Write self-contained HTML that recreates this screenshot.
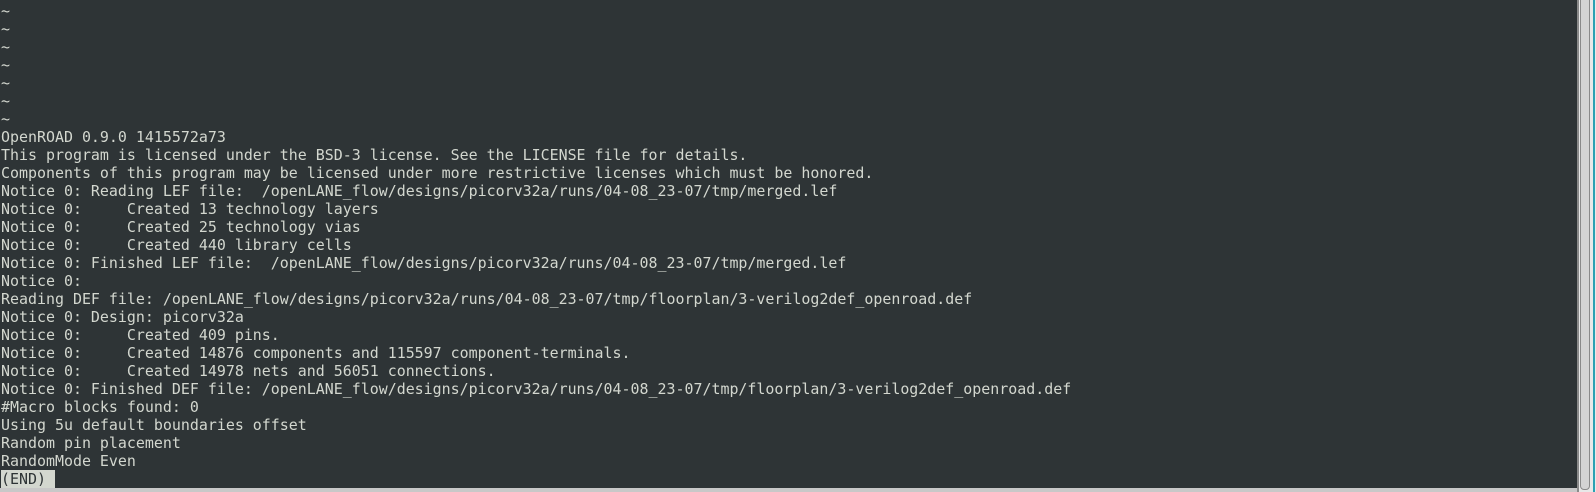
<!DOCTYPE html>
<html><head><meta charset="utf-8"><style>
html,body{margin:0;padding:0;width:1596px;height:492px;overflow:hidden;background:#2e3436;}
pre{margin:0;position:absolute;left:1px;top:2px;font-family:"DejaVu Sans Mono","Liberation Mono",monospace;font-size:14.95px;line-height:18.02px;color:#d3d7cf;}
.end{background:#d3d7cf;color:#2e3436;}
.sb{position:absolute;left:1577px;top:0;width:19px;height:492px;background:#e8e8e8;}
.sb1{position:absolute;left:1577px;top:0;width:2px;height:492px;background:#8a8a8a;}
.thumb{position:absolute;left:1580px;top:-4px;width:8px;height:492px;background:#d4d4d4;border:1px solid #8a8a8a;border-radius:0 0 4px 4px;}
.teal{position:absolute;left:1593px;top:0;width:2px;height:492px;background:#2aa1b3;}
.bot{position:absolute;left:0;top:488px;width:1577px;height:4px;background:#c8c8c8;}
</style></head><body>
<pre>~
~
~
~
~
~
~
OpenROAD 0.9.0 1415572a73
This program is licensed under the BSD-3 license. See the LICENSE file for details.
Components of this program may be licensed under more restrictive licenses which must be honored.
Notice 0: Reading LEF file:  /openLANE_flow/designs/picorv32a/runs/04-08_23-07/tmp/merged.lef
Notice 0:     Created 13 technology layers
Notice 0:     Created 25 technology vias
Notice 0:     Created 440 library cells
Notice 0: Finished LEF file:  /openLANE_flow/designs/picorv32a/runs/04-08_23-07/tmp/merged.lef
Notice 0:
Reading DEF file: /openLANE_flow/designs/picorv32a/runs/04-08_23-07/tmp/floorplan/3-verilog2def_openroad.def
Notice 0: Design: picorv32a
Notice 0:     Created 409 pins.
Notice 0:     Created 14876 components and 115597 component-terminals.
Notice 0:     Created 14978 nets and 56051 connections.
Notice 0: Finished DEF file: /openLANE_flow/designs/picorv32a/runs/04-08_23-07/tmp/floorplan/3-verilog2def_openroad.def
#Macro blocks found: 0
Using 5u default boundaries offset
Random pin placement
RandomMode Even
<span class="end">(END) </span></pre>
<div class="bot"></div>
<div class="sb"></div><div class="sb1"></div><div class="thumb"></div><div class="teal"></div>
</body></html>
